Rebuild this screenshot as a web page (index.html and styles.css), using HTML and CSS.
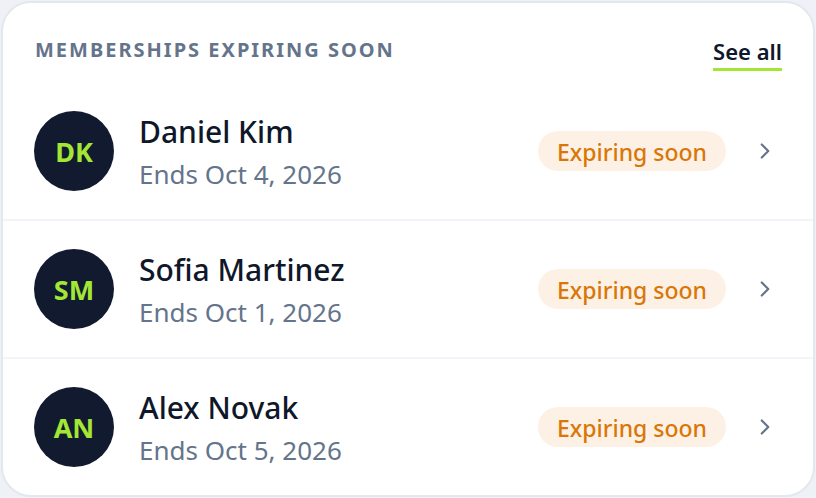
FILE: index.html
```html
<!DOCTYPE html>
<html>
<head>
<meta charset="utf-8">
<link rel="stylesheet" href="styles.css">
</head>
<body>
<div class="card">
  <div class="card-header">
    <h2 class="title">MEMBERSHIPS EXPIRING SOON</h2>
    <a class="see-all">See all</a>
  </div>
  <div class="row">
    <div class="avatar">DK</div>
    <div class="info">
      <div class="name">Daniel Kim</div>
      <div class="date">Ends Oct 4, 2026</div>
    </div>
    <span class="pill">Expiring soon</span>
    <svg class="chev" viewBox="0 0 24 24" width="26" height="26"><path d="M9 6l6 6-6 6" fill="none" stroke="#64748b" stroke-width="2" stroke-linecap="round" stroke-linejoin="round"/></svg>
  </div>
  <div class="row">
    <div class="avatar">SM</div>
    <div class="info">
      <div class="name">Sofia Martinez</div>
      <div class="date">Ends Oct 1, 2026</div>
    </div>
    <span class="pill">Expiring soon</span>
    <svg class="chev" viewBox="0 0 24 24" width="26" height="26"><path d="M9 6l6 6-6 6" fill="none" stroke="#64748b" stroke-width="2" stroke-linecap="round" stroke-linejoin="round"/></svg>
  </div>
  <div class="row">
    <div class="avatar">AN</div>
    <div class="info">
      <div class="name">Alex Novak</div>
      <div class="date">Ends Oct 5, 2026</div>
    </div>
    <span class="pill">Expiring soon</span>
    <svg class="chev" viewBox="0 0 24 24" width="26" height="26"><path d="M9 6l6 6-6 6" fill="none" stroke="#64748b" stroke-width="2" stroke-linecap="round" stroke-linejoin="round"/></svg>
  </div>
</div>
</body>
</html>
```
FILE: styles.css
```css
html, body {
  margin: 0;
  padding: 0;
  background: #eef1f6;
}
body {
  padding: 1px;
  font-family: "Noto Sans", "Open Sans", sans-serif;
}
.card {
  box-sizing: border-box;
  width: 814px;
  height: 496px;
  background: #ffffff;
  border: 2px solid #e3e7ee;
  border-radius: 30px;
  overflow: hidden;
  display: flex;
  flex-direction: column;
}
.card-header {
  height: 80px;
  box-sizing: border-box;
  display: flex;
  align-items: flex-start;
  justify-content: space-between;
  padding: 33px 31px 0 32px;
}
.title {
  margin: 0;
  font-size: 20px;
  font-weight: 700;
  letter-spacing: 2px;
  color: #64748b;
  line-height: 28px;
}
.see-all {
  font-size: 22px;
  font-weight: 600;
  color: #0f172a;
  line-height: 30px;
  padding-bottom: 2px;
  border-bottom: 3px solid #a3e635;
}
.row {
  flex: 1;
  display: flex;
  align-items: center;
  padding: 0 35px 0 31px;
  border-top: 2px solid #f1f4f8;
}
.card-header + .row {
  border-top: none;
}
.avatar {
  width: 80px;
  height: 80px;
  border-radius: 50%;
  background: #111a2e;
  color: #a3e635;
  font-weight: 700;
  font-size: 27px;
  display: flex;
  align-items: center;
  justify-content: center;
  flex-shrink: 0;
}
.info {
  flex: 1;
  margin-left: 25px;
  padding-top: 4px;
  display: flex;
  flex-direction: column;
}
.name {
  font-size: 30px;
  font-weight: 500;
  color: #0f172a;
  line-height: 40px;
}
.date {
  margin-top: 2px;
  font-size: 26px;
  color: #64748b;
  line-height: 40px;
}
.pill {
  display: inline-flex;
  align-items: center;
  height: 40px;
  padding: 1px 19px 0;
  box-sizing: border-box;
  border-radius: 20px;
  background: #fdf1e6;
  color: #d97706;
  font-size: 23px;
  font-weight: 500;
}
.chev {
  margin-left: 26px;
  flex-shrink: 0;
}
```
